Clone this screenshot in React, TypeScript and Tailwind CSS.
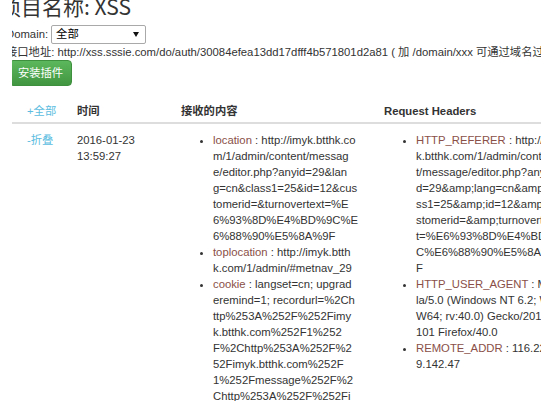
import React from "react";

const Key = ({ children }: { children: React.ReactNode }) => (
  <span className="text-[#8a5048]">{children}</span>
);

const Lines = ({ lines }: { lines: string[] }) => (
  <>
    {lines.map((l, i) => (
      <div key={i} className="whitespace-nowrap">
        {l}
      </div>
    ))}
  </>
);

export default function App() {
  return (
    <div className="w-[541px] h-[409px] bg-white overflow-hidden text-[#333] font-['Liberation_Sans','Noto_Sans_CJK_SC',sans-serif]">
      <div className="ml-[12px] overflow-hidden h-[401px]">
        <div className="ml-[-6px] w-[760px]">
          {/* Title */}
          <div className="ml-[-6px] mt-[-6px] h-[24px] text-[21px] leading-[24px] whitespace-nowrap font-['Noto_Sans_CJK_SC',sans-serif]">
            项目名称: XSS
          </div>
          {/* Domain */}
          <div className="flex items-center h-[20px] mt-[6px] text-[11.3px]">
            <span>Domain:</span>
            <div className="ml-[3px] w-[95px] h-[19px] border border-[#a9a9a9] rounded-[2px] bg-white flex items-center justify-between pl-[4px] pr-[6px]">
              <span className="text-black">全部</span>
              <svg width="6" height="5" viewBox="0 0 6 5">
                <path d="M0 0 L6 0 L3 5 Z" fill="#111" />
              </svg>
            </div>
          </div>
          {/* URL */}
          <div className="mt-[1px] h-[14px] leading-[14px] text-[11.3px] whitespace-nowrap">
            接口地址: http://xss.sssie.com/do/auth/30084efea13dd17dfff4b571801d2a81 ( 加 /domain/xxx 可通过域名过滤 )
          </div>
          {/* Button */}
          <div className="mt-[1px] ml-[3px] w-[63px] h-[26px] rounded-[4px] border border-[#3e8f3e] bg-gradient-to-b from-[#5cb85c] to-[#419641] text-white text-[11.3px] flex items-center justify-center">
            安装插件
          </div>
          {/* Table */}
          <div className="ml-[6px] mt-[13px] text-[11.3px] leading-[16px]">
            <div className="flex h-[25px] items-center border-b-2 border-[#ddd] font-bold">
              <div className="w-[58.6px] pl-[15px] font-normal text-[#5bbde0]">+全部</div>
              <div className="w-[104px] pl-[6.4px]">时间</div>
              <div className="w-[203px] pl-[6.4px]">接收的内容</div>
              <div className="w-[250px] pl-[6.4px]">Request Headers</div>
            </div>
            <div className="flex pt-[8px]">
              <div className="w-[58.6px] pl-[15px] text-[#5bbde0]">-折叠</div>
              <div className="w-[104px] pl-[6.4px]">
                <div>2016-01-23</div>
                <div>13:59:27</div>
              </div>
              <div className="w-[203px] pl-[6.4px]">
                <ul className="list-disc pl-[32px]">
                  <li>
                    <div className="whitespace-nowrap">
                      <Key>location</Key> : http://imyk.btthk.co
                    </div>
                    <Lines
                      lines={[
                        "m/1/admin/content/messag",
                        "e/editor.php?anyid=29&lan",
                        "g=cn&class1=25&id=12&cus",
                        "tomerid=&turnovertext=%E",
                        "6%93%8D%E4%BD%9C%E",
                        "6%88%90%E5%8A%9F",
                      ]}
                    />
                  </li>
                  <li>
                    <div className="whitespace-nowrap">
                      <Key>toplocation</Key> : http://imyk.btth
                    </div>
                    <Lines lines={["k.com/1/admin/#metnav_29"]} />
                  </li>
                  <li>
                    <div className="whitespace-nowrap">
                      <Key>cookie</Key> : langset=cn; upgrad
                    </div>
                    <Lines
                      lines={[
                        "eremind=1; recordurl=%2Ch",
                        "ttp%253A%252F%252Fimy",
                        "k.btthk.com%252F1%252",
                        "F%2Chttp%253A%252F%2",
                        "52Fimyk.btthk.com%252F",
                        "1%252Fmessage%252F%2",
                        "Chttp%253A%252F%252Fi",
                        "myk.btthk.com%252F1%25",
                      ]}
                    />
                  </li>
                </ul>
              </div>
              <div className="w-[250px] pl-[6.4px]">
                <ul className="list-disc pl-[32px]">
                  <li>
                    <div className="whitespace-nowrap">
                      <Key>HTTP_REFERER</Key> : http://imy
                    </div>
                    <Lines
                      lines={[
                        "k.btthk.com/1/admin/conten",
                        "t/message/editor.php?anyi",
                        "d=29&amp;lang=cn&amp;cla",
                        "ss1=25&amp;id=12&amp;cu",
                        "stomerid=&amp;turnovertex",
                        "t=%E6%93%8D%E4%BD%9",
                        "C%E6%88%90%E5%8A%9",
                        "F",
                      ]}
                    />
                  </li>
                  <li>
                    <div className="whitespace-nowrap">
                      <Key>HTTP_USER_AGENT</Key> : Mozil
                    </div>
                    <Lines
                      lines={[
                        "la/5.0 (Windows NT 6.2; WO",
                        "W64; rv:40.0) Gecko/20100",
                        "101 Firefox/40.0",
                      ]}
                    />
                  </li>
                  <li>
                    <div className="whitespace-nowrap">
                      <Key>REMOTE_ADDR</Key> : 116.22
                    </div>
                    <Lines lines={["9.142.47"]} />
                  </li>
                </ul>
              </div>
            </div>
          </div>
        </div>
      </div>
    </div>
  );
}
